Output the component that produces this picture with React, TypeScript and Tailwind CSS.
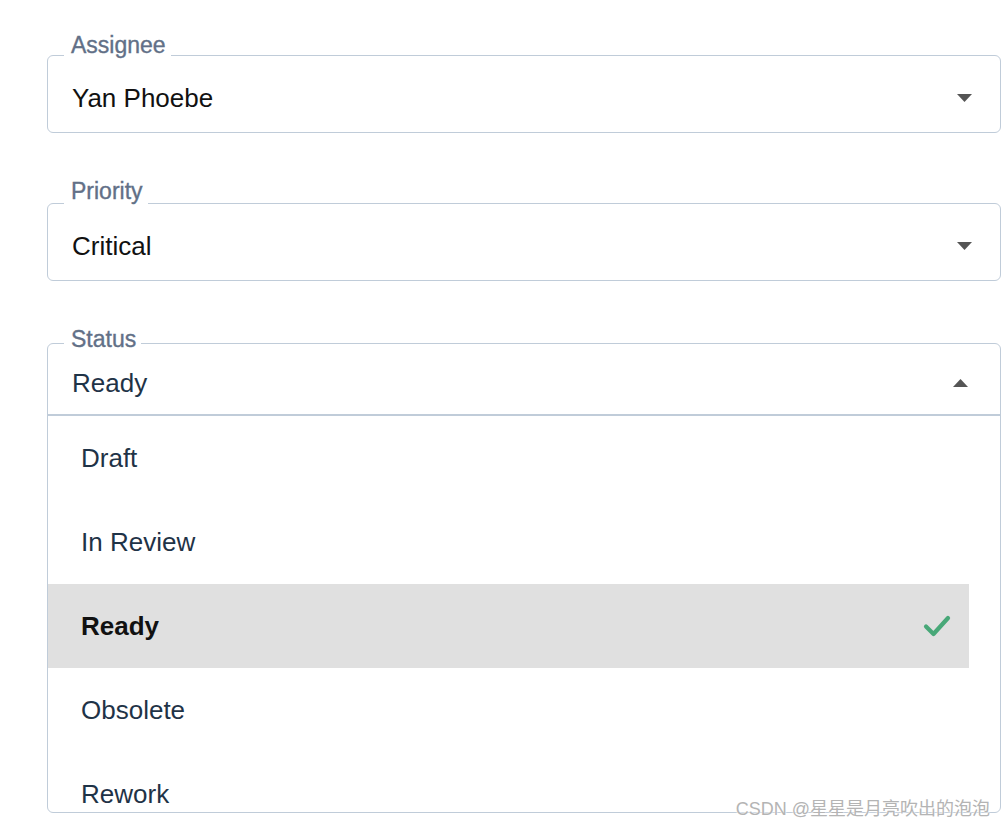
import { useState } from "react";

const statuses = ["Draft", "In Review", "Ready", "Obsolete", "Rework"];

function Caret({ up = false }: { up?: boolean }) {
  return (
    <svg width="15" height="8" viewBox="0 0 15 8" className="shrink-0">
      <path d={up ? "M0 8 L7.5 0 L15 8 Z" : "M0 0 L15 0 L7.5 8 Z"} fill="#555555" />
    </svg>
  );
}

function Check() {
  return (
    <svg width="28" height="24" viewBox="0 0 28 24" className="shrink-0">
      <path
        d="M3 12.5 L10.5 20 L25 4"
        fill="none"
        stroke="#48a878"
        strokeWidth="4.2"
        strokeLinecap="round"
        strokeLinejoin="round"
      />
    </svg>
  );
}

function Label({ text, top }: { text: string; top: string }) {
  return (
    <span
      className={
        "absolute left-[16px] bg-white pl-[7px] pr-[5px] pb-[4px] text-[23px] leading-[23px] text-[#627087] [-webkit-text-stroke:0.35px_#627087] " +
        top
      }
    >
      {text}
    </span>
  );
}

function SelectBox({ label, value, top }: { label: string; value: string; top: string }) {
  return (
    <div className="relative flex h-[78px] items-center justify-between rounded-[6px] border border-[#c0ccd9] pt-[8px] pl-[24px] pr-[28px]">
      <Label text={label} top={top} />
      <span className="text-[26px] text-[#111111]">{value}</span>
      <Caret />
    </div>
  );
}

export default function App() {
  const [selected] = useState("Ready");

  return (
    <div
      className="relative min-h-[830px] bg-white pl-[47px] pr-[7px] pt-[55px]"
      style={{ fontFamily: '"Liberation Sans", Arial, sans-serif' }}
    >
      <SelectBox label="Assignee" value="Yan Phoebe" top="top-[-22px]" />
      <div className="mt-[70px]">
        <SelectBox label="Priority" value="Critical" top="top-[-24px]" />
      </div>

      <div className="relative mt-[62px] rounded-[6px] border border-[#c0ccd9]">
        <Label text="Status" top="top-[-16px]" />
        <div className="flex h-[72px] items-center justify-between border-b-2 border-[#c0ccd9] pt-[8px] pl-[24px] pr-[32px]">
          <span className="text-[26px] text-[#1f3347]">{selected}</span>
          <Caret up />
        </div>
        <div className="h-[396px] overflow-hidden pr-[31px]">
          {statuses.map((s) => {
            const active = s === selected;
            return (
              <div
                key={s}
                className={
                  active
                    ? "flex h-[84px] items-center justify-between bg-[#e0e0e0] pl-[33px] pr-[18px]"
                    : "flex h-[84px] items-center justify-between pl-[33px] pr-[18px]"
                }
              >
                <span
                  className={
                    active
                      ? "text-[26px] font-bold text-[#111111]"
                      : "text-[26px] text-[#1f3347]"
                  }
                >
                  {s}
                </span>
                {active && <Check />}
              </div>
            );
          })}
        </div>
      </div>

      <span
        className="absolute bottom-[7px] right-[18px] text-[18px] text-[#b4b4b4] [text-shadow:0_0_2px_#ffffff,0_0_2px_#ffffff]"
        style={{ fontFamily: '"Liberation Sans", "Noto Sans CJK SC", sans-serif' }}
      >
        CSDN @星星是月亮吹出的泡泡
      </span>
    </div>
  );
}
